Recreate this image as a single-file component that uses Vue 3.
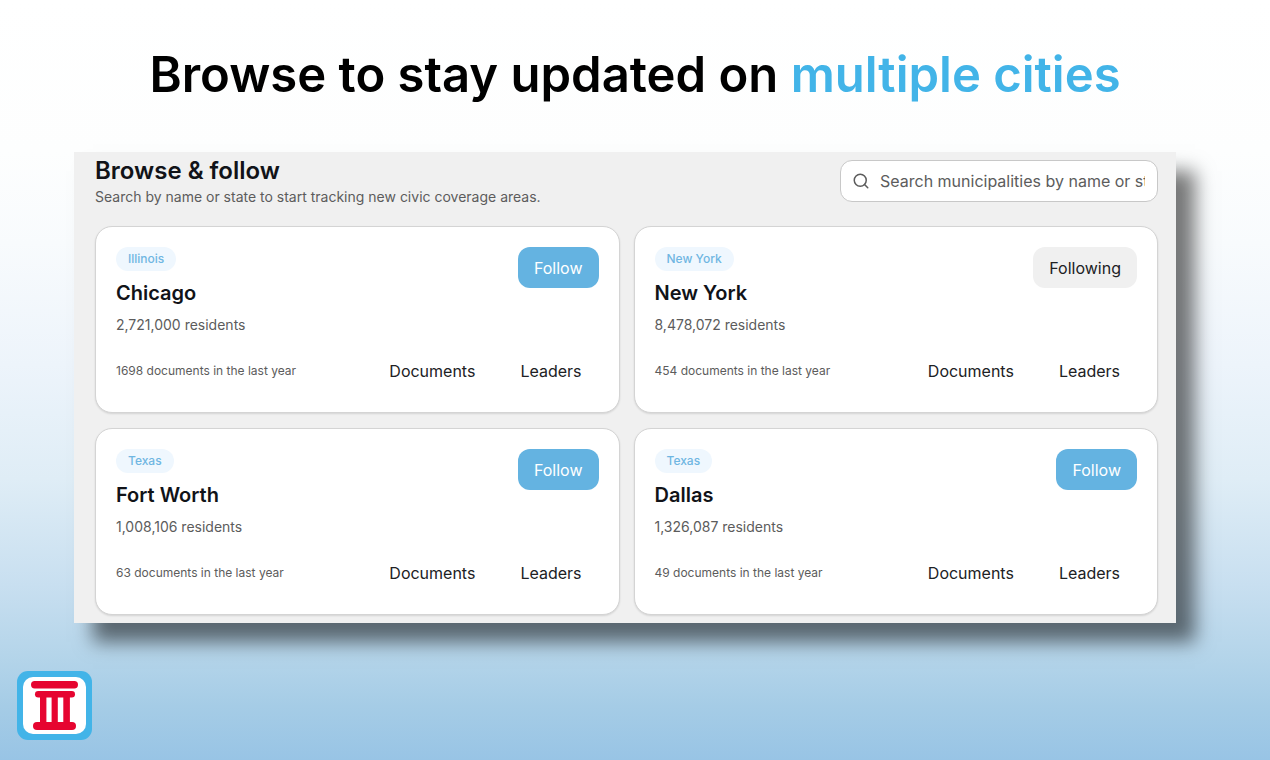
<script setup>
const cities = [
  { state: 'Illinois', name: 'Chicago', residents: '2,721,000', documents: 1698, following: false },
  { state: 'New York', name: 'New York', residents: '8,478,072', documents: 454, following: true },
  { state: 'Texas', name: 'Fort Worth', residents: '1,008,106', documents: 63, following: false },
  { state: 'Texas', name: 'Dallas', residents: '1,326,087', documents: 49, following: false },
]
</script>

<template>
  <main class="page">
    <h1 class="headline">Browse to stay updated on <span class="accent">multiple cities</span></h1>

    <section class="panel" aria-labelledby="browse-title">
      <header class="panel-header">
        <div>
          <h2 id="browse-title" class="panel-title">Browse &amp; follow</h2>
          <p class="panel-subtitle">Search by name or state to start tracking new civic coverage areas.</p>
        </div>
        <label class="search">
          <svg class="search-icon" viewBox="0 0 24 24" fill="none" stroke="currentColor" stroke-width="2" stroke-linecap="round" aria-hidden="true">
            <circle cx="11" cy="11" r="8" />
            <path d="M21 21l-4.3-4.3" />
          </svg>
          <input class="search-input" type="text" aria-label="Search municipalities" placeholder="Search municipalities by name or state" />
        </label>
      </header>

      <div class="grid">
        <article v-for="city in cities" :key="city.name" class="card">
          <div class="card-top">
            <div>
              <span class="badge">{{ city.state }}</span>
              <h3 class="city">{{ city.name }}</h3>
              <p class="residents">{{ city.residents }} residents</p>
            </div>
            <button type="button" class="follow" :class="{ following: city.following }">
              {{ city.following ? 'Following' : 'Follow' }}
            </button>
          </div>
          <div class="card-bottom">
            <p class="documents">{{ city.documents }} documents in the last year</p>
            <nav class="links" :aria-label="city.name">
              <a href="#">Documents</a>
              <a href="#">Leaders</a>
            </nav>
          </div>
        </article>
      </div>
    </section>

    <footer class="footer">
      <svg class="logo" viewBox="0 0 75 69" role="img" aria-label="Civic column logo">
        <rect width="75" height="69" rx="11" fill="#42b4e8" />
        <rect x="6" y="6" width="63" height="57" rx="10" fill="#fff" />
        <g fill="#e60530">
          <rect x="14" y="10" width="47" height="7.5" rx="3.7" />
          <rect x="18" y="20" width="40" height="6.5" rx="3.2" />
          <rect x="23" y="24" width="6.4" height="30" />
          <rect x="34.6" y="24" width="6.2" height="30" />
          <rect x="46.3" y="24" width="6.6" height="30" />
          <rect x="16" y="51" width="43" height="8" rx="4" />
        </g>
      </svg>
    </footer>
  </main>
</template>

<style>
body {
  margin: 0;
}
</style>

<style scoped>
* {
  box-sizing: border-box;
}
h1, h2, h3, p {
  margin: 0;
}
.page {
  display: flex;
  flex-direction: column;
  min-height: 100vh;
  padding: 44px 94px 20px 74px;
  background: linear-gradient(180deg, #fff 0%, #fdfefe 20%, #f8fbfd 32%, #edf4fb 48%, #dfedf6 63%, #c8dff0 77%, #b5d5ea 86%, #a5cce6 93%, #98c4e5 100%);
  font-family: Inter, "Liberation Sans", sans-serif;
  color: #111318;
}
.headline {
  margin: 0 -20px 0 0;
  font-size: 49px;
  line-height: 62px;
  font-weight: 600;
  text-align: center;
  white-space: nowrap;
  color: #000;
}
.accent {
  color: #42b4e8;
}
.panel {
  margin-top: 46px;
  padding: 8px 18px 8px 21px;
  background: #f0f0f0;
  box-shadow: 19px 19px 18px rgba(0, 0, 0, 0.53);
}
.panel-header {
  display: flex;
  justify-content: space-between;
  align-items: flex-start;
  margin-bottom: 18px;
}
.panel-title {
  font-size: 24px;
  line-height: 22px;
  font-weight: 600;
}
.panel-subtitle {
  margin-top: 4px;
  font-size: 14px;
  line-height: 22px;
  color: #5c5c5c;
}
.search {
  display: flex;
  align-items: center;
  gap: 10px;
  width: 318px;
  height: 42px;
  padding: 0 12px 0 11px;
  border: 1px solid #c8c8c8;
  border-radius: 12px;
  background: #fff;
  color: #5c5c5c;
}
.search-icon {
  flex: none;
  width: 18px;
  height: 18px;
}
.search-input {
  flex: 1;
  min-width: 0;
  padding: 0;
  border: 0;
  outline: 0;
  background: none;
  font: 16px/24px Inter, "Liberation Sans", sans-serif;
  color: inherit;
}
.search-input::placeholder {
  color: #5c5c5c;
}
.grid {
  display: grid;
  grid-template-columns: 1fr 1fr;
  gap: 15px 14px;
}
.card {
  padding: 20px 20px 21px;
  border: 1px solid #d4d4d4;
  border-radius: 17px;
  background: #fff;
  box-shadow: 0 1px 2px rgba(0, 0, 0, 0.12);
}
.card-top,
.card-bottom {
  display: flex;
  justify-content: space-between;
  align-items: flex-start;
}
.badge {
  display: block;
  width: fit-content;
  padding: 0 12px;
  border-radius: 12px;
  background: #eff7fe;
  font-size: 12px;
  line-height: 24px;
  font-weight: 500;
  color: #6fb6e2;
}
.city {
  margin-top: 8px;
  font-size: 20px;
  line-height: 28px;
  font-weight: 600;
}
.residents {
  margin-top: 8px;
  font-size: 14px;
  line-height: 20px;
  color: #5c5c5c;
}
.follow {
  height: 41px;
  padding: 0 16px;
  border: 0;
  border-radius: 12px;
  background: #64b3e1;
  font: 16px/24px Inter, "Liberation Sans", sans-serif;
  color: #fff;
}
.follow.following {
  background: #f0f0f0;
  color: #202124;
}
.card-bottom {
  align-items: center;
  margin-top: 16px;
}
.documents {
  font-size: 12px;
  line-height: 18px;
  color: #5c5c5c;
}
.links {
  display: flex;
  gap: 11px;
}
.links a {
  padding: 0 17px;
  font-size: 16px;
  line-height: 40px;
  color: #202124;
  text-decoration: none;
}
.footer {
  margin: auto 0 0 -57px;
}
.logo {
  display: block;
  width: 75px;
  height: 69px;
}
</style>
